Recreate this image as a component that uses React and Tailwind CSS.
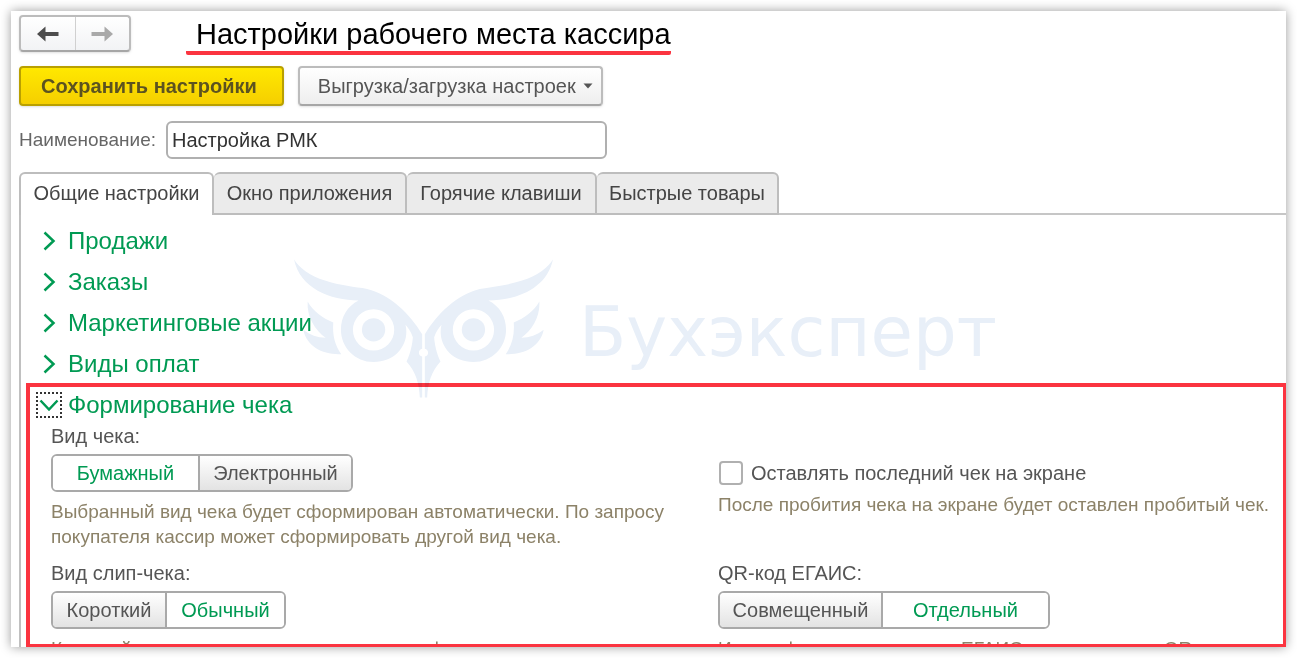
import { useId, useState } from "react";

const TABS = [
  { name: "Общие настройки", width: "w-[195px]" },
  { name: "Окно приложения", width: "w-[193px]" },
  { name: "Горячие клавиши", width: "w-[190px]" },
  { name: "Быстрые товары", width: "w-[182px]" },
];
const SECTIONS = ["Продажи", "Заказы", "Маркетинговые акции", "Виды оплат"];

// --- Navigation -------------------------------------------------------------
function ArrowIcon({ className = "" }) {
  return (
    <svg viewBox="0 0 22 16" className={`h-4 w-[22px] ${className}`} fill="currentColor" aria-hidden="true">
      <path d="M0 8 L8.500 0.500 V6 H21.500 V10 H8.500 V15.500 Z" />
    </svg>
  );
}

function HistoryButtons() {
  return (
    <div className="flex h-[37px] w-28 rounded-sm border-2 border-[#bcbcbc] border-b-[#a6a6a6] bg-linear-to-b from-white to-[#f2f3f5] shadow-sm">
      <button type="button" aria-label="Назад" className="flex flex-1 items-center justify-center border-r border-[#d0d0d0] text-[#4d4d4d]">
        <ArrowIcon />
      </button>
      <button type="button" aria-label="Вперед" className="flex flex-1 items-center justify-center text-[#a9a9a9]">
        <ArrowIcon className="rotate-180" />
      </button>
    </div>
  );
}

// --- Collapsible group title ------------------------------------------------
function Section({ title, open = false }) {
  return (
    <h2 className="h-[41px] text-2xl text-[#009a53]">
      <button type="button" aria-expanded={open} className="flex h-full items-center gap-[6px]">
        <span
          className={`flex h-[26px] w-[26px] items-center justify-center ${
            open ? "border-2 border-dotted border-[#333333]" : ""
          }`}
        >
          <svg
            viewBox="0 0 20 20"
            className={`h-5 w-5 shrink-0 ${open ? "rotate-90" : ""}`}
            fill="none"
            stroke="currentColor"
            strokeWidth="2.500"
            aria-hidden="true"
          >
            <path d="M5.500 1.500 L14.500 10 L5.500 18.500" />
          </svg>
        </span>
        {title}
      </button>
    </h2>
  );
}

// --- Two-way switch ---------------------------------------------------------
function Switch({ label, options, initial, widths }) {
  const id = useId();
  const [value, setValue] = useState(initial);
  return (
    <div>
      <div id={id} className="leading-6 text-[#555555]">
        {label}
      </div>
      <div role="group" aria-labelledby={id} className="mt-[6px] flex h-[38px] w-fit overflow-hidden rounded-md border-2 border-[#a9a9a9]">
        {options.map((o, i) => (
          <button
            key={o}
            type="button"
            aria-pressed={o === value}
            onClick={() => setValue(o)}
            className={`${widths[i]} ${i > 0 ? "border-l-2 border-[#a9a9a9]" : ""} ${
              o === value ? "bg-white text-[#009a53]" : "bg-linear-to-b from-white to-[#e3e3e3] text-[#555555]"
            }`}
          >
            {o}
          </button>
        ))}
      </div>
    </div>
  );
}

function Hint({ children }) {
  return <p className="mt-[7px] text-[19px] leading-[25px] text-[#8c8268]">{children}</p>;
}

// --- Watermark --------------------------------------------------------------
function OwlHalf() {
  return (
    <>
      <path
        d="M42 57 C55 80 90 108 135 121 C180 136 225 140 262 146 C330 162 390 220 427 282 V326 C414 328 414 347 427 349 V472 H420 C418 430 408 395 380 364 C392 340 398 310 399 291 C393 275 385 263 377 254 C390 310 350 366 281 366 C225 366 183 322 183 269 C183 230 202 198 236 181 C150 180 60 145 42 57 Z M281 207 A62 62 0 1 0 281 331 A62 62 0 1 0 281 207 Z"
        fillRule="evenodd"
      />
      <circle cx="281" cy="269" r="35" />
      <path d="M83 184 C100 215 130 235 160 247 C157 285 165 315 184 342 C130 345 80 320 70 269 C90 285 112 293 137 293 C105 270 80 230 83 184 Z" />
    </>
  );
}

function Watermark() {
  return (
    <div className="pointer-events-none absolute top-[248px] left-[283px] flex items-start text-[#e8eff8] mix-blend-multiply" aria-hidden="true">
      <svg viewBox="42 57 778 416" className="h-[139px] w-[259px]" fill="currentColor">
        <OwlHalf />
        <g transform="matrix(-1 0 0 1 862 0)">
          <OwlHalf />
        </g>
      </svg>
      <span className="mt-[33px] ml-[26px] font-['DejaVu_Sans'] text-[69px] leading-[80px]">Бухэксперт</span>
    </div>
  );
}

export default function App() {
  const [tab, setTab] = useState(TABS[0].name);
  return (
    <div className="h-screen bg-white p-[11px] font-['Liberation_Sans',sans-serif] text-xl">
      <main className="relative flex h-full flex-col overflow-hidden bg-white shadow-[0_0_10px_rgba(0,0,0,0.4)]">
        <header className="flex items-start gap-[55px] pt-1 pl-2">
          <HistoryButtons />
          <h1 className="rounded-xs border-b-4 border-[#fb3440] pt-[2px] pl-[10px] text-[29px] leading-[34px] text-black">
            Настройки рабочего места кассира
          </h1>
        </header>

        <div className="mt-[11px] flex gap-[14px] pl-2">
          <button
            type="button"
            className="h-10 rounded-sm border-2 border-[#b9a000] bg-linear-to-b from-[#ffe800] to-[#f5cf00] pr-[25px] pl-5 font-bold text-[#5c5320] shadow-sm"
          >
            Сохранить настройки
          </button>
          <button
            type="button"
            className="flex h-10 items-center gap-[7px] rounded-sm border-2 border-[#bcbcbc] border-b-[#a6a6a6] bg-linear-to-b from-white to-[#eeeeee] pr-2 pl-[18px] text-[#555555] shadow-sm"
          >
            Выгрузка/загрузка настроек
            <svg viewBox="0 0 10 6" className="h-[6px] w-[10px]" fill="currentColor" aria-hidden="true">
              <path d="M0.500 0.500 H9.500 L5 5.500 Z" />
            </svg>
          </button>
        </div>

        <div className="mt-[15px] flex items-center gap-[10px] pl-2">
          <label htmlFor="config-name" className="text-[19px] text-[#666666]">
            Наименование:
          </label>
          <input
            id="config-name"
            defaultValue="Настройка РМК"
            className="h-[38px] w-[441px] rounded-md border-2 border-[#b0b0b0] px-1 text-[#333333]"
          />
        </div>

        <div role="tablist" className="mt-[13px] ml-2 flex h-[43px] shrink-0">
          {TABS.map(({ name, width }, i) => (
            <button
              key={name}
              type="button"
              role="tab"
              aria-selected={name === tab}
              onClick={() => setTab(name)}
              className={`rounded-t-md border-t-2 border-r-2 border-[#bdbdbd] whitespace-nowrap text-[#444444] ${width} ${
                i === 0 ? "border-l-2" : ""
              } ${name === tab ? "bg-white pb-1" : "border-b-2 bg-[#ebebeb] pb-[2px]"}`}
            >
              {name}
            </button>
          ))}
          <div className="flex-1 border-b-2 border-[#c6c6c6]" />
        </div>

        <div role="tabpanel" className="ml-2 flex min-h-0 flex-1 flex-col border-l-2 border-[#c0c0c0] pt-[5px] pl-[5px]">
          <div className="pl-[10px]">
            {SECTIONS.map((s) => (
              <Section key={s} title={s} />
            ))}
          </div>

          <section className="-mt-px min-h-0 flex-1 overflow-hidden border-4 border-r-3 border-b-3 border-[#fb3440]">
            <div className="-mt-[3px] pl-[6px]">
              <Section title="Формирование чека" open />
            </div>
            <div className="-mt-px grid grid-cols-[667px_1fr] pl-[21px]">
              <div>
                <Switch
                  label="Вид чека:"
                  options={["Бумажный", "Электронный"]}
                  initial="Бумажный"
                  widths={["w-[145px]", "w-[153px]"]}
                />
                <Hint>
                  Выбранный вид чека будет сформирован автоматически. По запросу
                  <br />
                  покупателя кассир может сформировать другой вид чека.
                </Hint>
              </div>
              <div className="pt-[37px]">
                <label className="flex items-center gap-2 leading-6 text-[#555555]">
                  <input type="checkbox" className="ml-px h-6 w-6 appearance-none rounded-sm border-2 border-[#b0b0b0] bg-white" />
                  Оставлять последний чек на экране
                </label>
                <Hint>После пробития чека на экране будет оставлен пробитый чек.</Hint>
              </div>
            </div>
            <div className="mt-3 grid grid-cols-[667px_1fr] pl-[21px]">
              <div>
                <Switch
                  label="Вид слип-чека:"
                  options={["Короткий", "Обычный"]}
                  initial="Обычный"
                  widths={["w-28", "w-[119px]"]}
                />
                <Hint>Короткий слип-чек содержит отдельную информацию.</Hint>
              </div>
              <div>
                <Switch
                  label="QR-код ЕГАИС:"
                  options={["Совмещенный", "Отдельный"]}
                  initial="Отдельный"
                  widths={["w-[161px]", "w-[167px]"]}
                />
                <Hint>Идентификатор документа ЕГАИС печатается как QR-код.</Hint>
              </div>
            </div>
          </section>
        </div>

        <Watermark />
      </main>
    </div>
  );
}
